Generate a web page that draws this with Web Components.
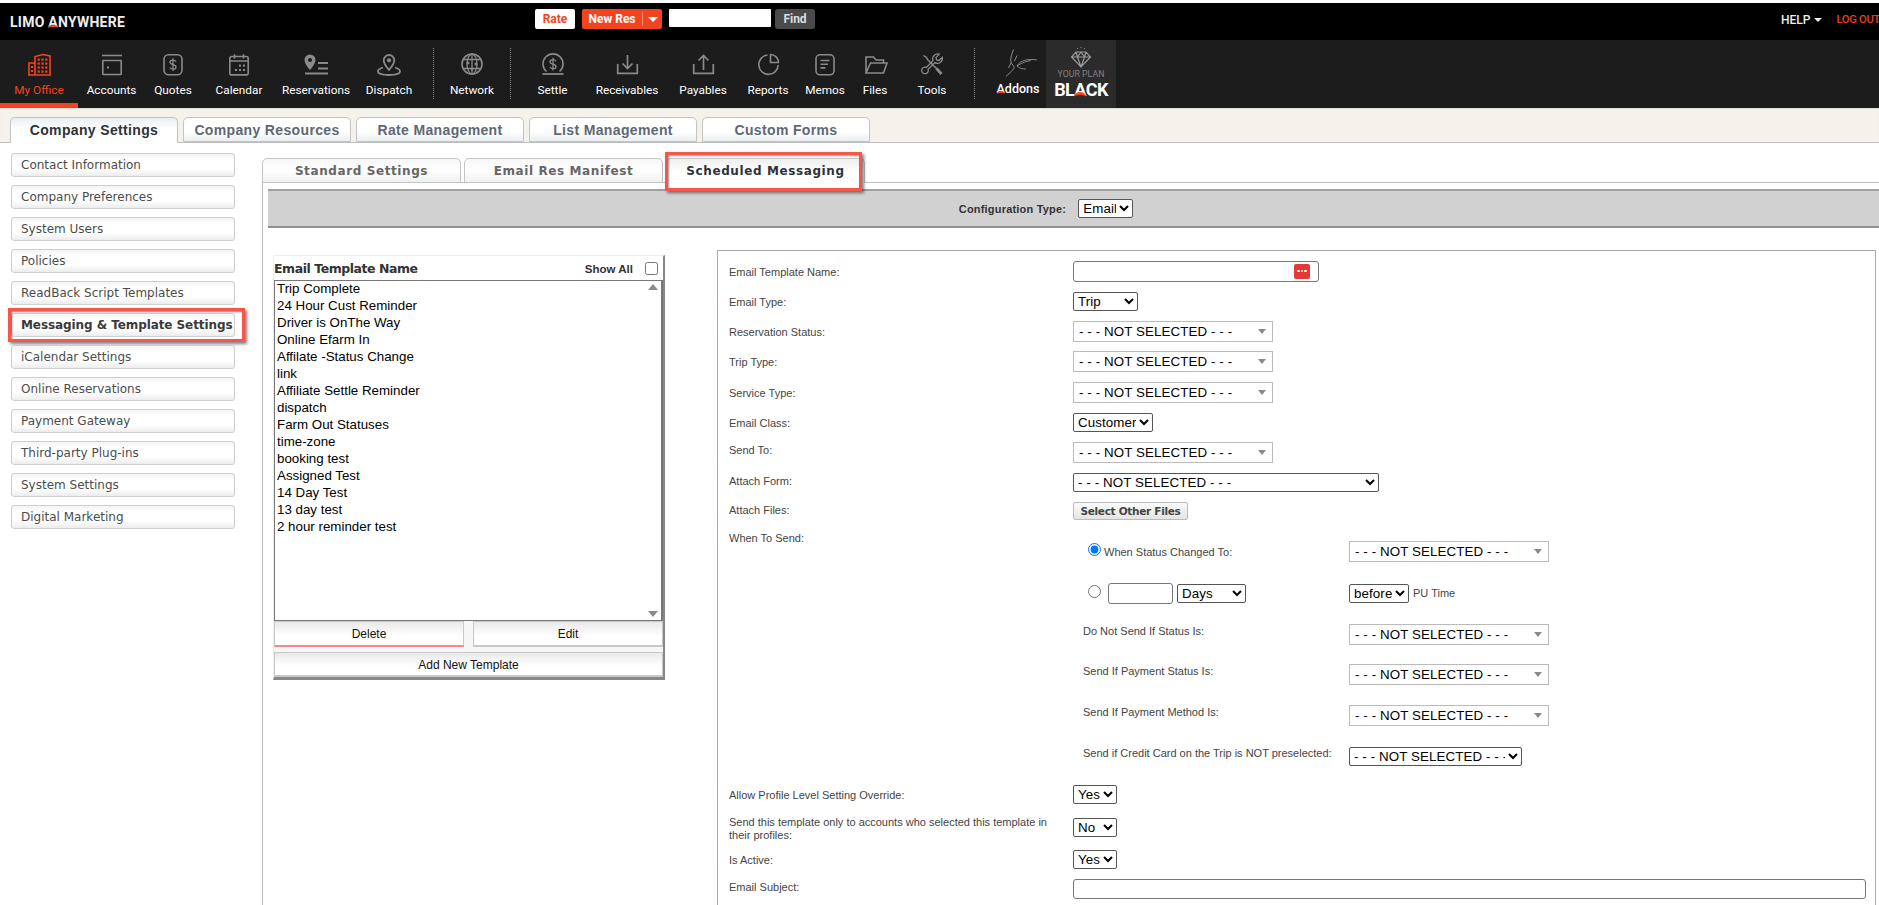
<!DOCTYPE html>
<html>
<head>
<meta charset="utf-8">
<title>Limo Anywhere</title>
<style>
  html, body { margin: 0; height: 905px; overflow: hidden; background: #fff; }
  body { font-family: "Liberation Sans", Arial, sans-serif; padding-top: 3px; box-sizing: border-box; display: flex; flex-direction: column; }
  la-main { flex: 1; min-height: 0; }
</style>
</head>
<body>

<la-topbar></la-topbar>

<la-nav>
  <la-nav-item w="78" active label="My Office">
    <svg width="28" height="24" viewBox="0 0 28 24" fill="none" stroke="currentColor" stroke-width="1.6"><path d="M4 22V10h6M10 22V3.5l8-2 7 1.5v19M3 22h23"/><g fill="currentColor" stroke="none"><rect x="12.6" y="5.5" width="2.2" height="2.2"/><rect x="16.4" y="5.5" width="2.2" height="2.2"/><rect x="20.2" y="5.5" width="2.2" height="2.2"/><rect x="12.6" y="9.5" width="2.2" height="2.2"/><rect x="16.4" y="9.5" width="2.2" height="2.2"/><rect x="20.2" y="9.5" width="2.2" height="2.2"/><rect x="12.6" y="13.5" width="2.2" height="2.2"/><rect x="16.4" y="13.5" width="2.2" height="2.2"/><rect x="20.2" y="13.5" width="2.2" height="2.2"/><rect x="12.6" y="17.5" width="2.2" height="2.2"/><rect x="16.4" y="17.5" width="2.2" height="2.2"/><rect x="20.2" y="17.5" width="2.2" height="2.2"/><rect x="6" y="13" width="2" height="2"/><rect x="6" y="17" width="2" height="2"/></g></svg>
  </la-nav-item>
  <la-nav-item w="67" label="Accounts">
    <svg width="28" height="24" viewBox="0 0 28 24" fill="none" stroke="currentColor" stroke-width="1.6"><path d="M4 2.5h20"/><rect x="4.8" y="7.5" width="18.4" height="14" rx=".5"/><rect x="9" y="13.5" width="2" height="2" fill="currentColor" stroke="none"/></svg>
  </la-nav-item>
  <la-nav-item w="56" label="Quotes">
    <svg width="28" height="24" viewBox="0 0 28 24" fill="none" stroke="currentColor" stroke-width="1.6"><rect x="5" y="1.8" width="18" height="20" rx="4.5"/><path d="M17 8.6c-.6-1-1.6-1.5-3-1.5-1.8 0-3 .9-3 2.2 0 3 6 1.6 6 4.6 0 1.3-1.2 2.2-3 2.2-1.4 0-2.5-.6-3-1.6M14 5.3v12.6" stroke-width="1.3"/></svg>
  </la-nav-item>
  <la-nav-item w="76" label="Calendar">
    <svg width="28" height="24" viewBox="0 0 28 24" fill="none" stroke="currentColor" stroke-width="1.6"><rect x="4.8" y="3.5" width="18.4" height="18.4" rx="2"/><path d="M5 8h18M9.5 1.2v4.4M18.5 1.2v4.4"/><g fill="currentColor" stroke="none"><rect x="14" y="11.6" width="2" height="2"/><rect x="18" y="11.6" width="2" height="2"/><rect x="10" y="16" width="2" height="2"/><rect x="14" y="16" width="2" height="2"/><rect x="18" y="16" width="2" height="2"/></g></svg>
  </la-nav-item>
  <la-nav-item w="78" label="Reservations">
    <svg width="28" height="24" viewBox="0 0 28 24" fill="none" stroke="currentColor" stroke-width="1.6"><path d="M8 1.5A5.5 5.5 0 0 0 2.5 7C2.5 11 8 17 8 17s5.500-6 5.500-10A5.500 5.500 0 0 0 8 1.500z" fill="currentColor" stroke="none"/><circle cx="8" cy="7" r="2" fill="#1c1c1c" stroke="none"/><path d="M16 10h10M16 15.500h10M3 20.500h23" stroke-width="1.800"/></svg>
  </la-nav-item>
  <la-nav-item w="68" label="Dispatch">
    <svg width="28" height="24" viewBox="0 0 28 24" fill="none" stroke="currentColor" stroke-width="1.6"><path d="M14 2a5.300 5.300 0 0 0-5.300 5.300C8.700 11 14 16.800 14 16.800S19.300 11 19.300 7.300A5.300 5.300 0 0 0 14 2z" stroke-width="1.800"/><circle cx="14" cy="7.300" r="2.100" fill="currentColor" stroke="none"/><path d="M8 14.500c-3.400 1-5 2.500-5 4 0 2.200 5 3.500 11 3.500s11-1.300 11-3.500c0-1.500-1.600-3-5-4" stroke-width="1.800"/></svg>
  </la-nav-item>
  <la-nav-sep gap="10"></la-nav-sep>
  <la-nav-item w="76" label="Network">
    <svg width="28" height="24" viewBox="0 0 28 24" fill="none" stroke="currentColor" stroke-width="1.300"><circle cx="14" cy="11" r="10" stroke-width="1.600"/><ellipse cx="14" cy="11" rx="5" ry="10"/><path d="M14 1v20M5 6.500h18M5 15.500h18"/><g fill="currentColor" stroke="none"><circle cx="10" cy="10" r="1.500"/><circle cx="18" cy="11" r="1.500"/><circle cx="14" cy="16" r="1.500"/></g></svg>
  </la-nav-item>
  <la-nav-sep></la-nav-sep>
  <la-nav-item w="83" label="Settle">
    <svg width="28" height="24" viewBox="0 0 28 24" fill="none" stroke="currentColor" stroke-width="1.600"><path d="M7.500 18.500A10 10 0 1 1 20.500 18.500"/><path d="M3.500 21h21" stroke-width="1.800"/><path d="M17 8.100c-.6-1-1.600-1.500-3-1.500-1.800 0-3 .9-3 2.200 0 3 6 1.600 6 4.600 0 1.300-1.200 2.200-3 2.200-1.400 0-2.500-.6-3-1.600M14 4.800v12.600" stroke-width="1.300"/></svg>
  </la-nav-item>
  <la-nav-item w="66" label="Receivables">
    <svg width="28" height="24" viewBox="0 0 28 24" fill="none" stroke="currentColor" stroke-width="1.700"><path d="M4.700 11v9.300h19.600V11M14.500 2v13.500M9.500 10.500l5 5 5-5"/></svg>
  </la-nav-item>
  <la-nav-item w="86" label="Payables">
    <svg width="28" height="24" viewBox="0 0 28 24" fill="none" stroke="currentColor" stroke-width="1.700"><path d="M4.700 11v9.300h19.600V11M14.500 17V2.500M9.500 7.500l5-5 5 5"/></svg>
  </la-nav-item>
  <la-nav-item w="44" label="Reports">
    <svg width="28" height="24" viewBox="0 0 28 24" fill="none" stroke="currentColor" stroke-width="1.600"><path d="M13.500 2A9.700 9.700 0 1 0 24.200 12"/><path d="M16.500 1.500A8 8 0 0 1 24.500 9.500H16.500z"/></svg>
  </la-nav-item>
  <la-nav-item w="70" label="Memos">
    <svg width="28" height="24" viewBox="0 0 28 24" fill="none" stroke="currentColor" stroke-width="1.600"><rect x="5" y="1.800" width="18" height="20" rx="4"/><path d="M9.500 7.500h9M9.500 11.200h7.500M9.500 14.900h5"/></svg>
  </la-nav-item>
  <la-nav-item w="30" label="Files">
    <svg width="28" height="24" viewBox="0 0 28 24" fill="none" stroke="currentColor" stroke-width="1.600"><path d="M5 20V4h7.500l2.500 3h7.500v3M5 20h17.500L26 10H9.500z"/></svg>
  </la-nav-item>
  <la-nav-item w="84" label="Tools">
    <svg width="28" height="24" viewBox="0 0 28 24" fill="none" stroke="currentColor" stroke-width="1.600"><path d="M5.500 2.500L8.500 4.500 9.500 6.500 19 16" stroke-width="1.400"/><path d="M18.500 15.500l5 5.500" stroke-width="2.800"/><path d="M24.300 4.300l-3.200 3.200-2.500-.6-.6-2.500 3.200-3.200a5 5 0 0 0-6.200 6.500L8.300 14.400a3.300 3.300 0 1 0 1.800 2l6.700-6.800a5 5 0 0 0 7.500-5.300z" stroke-width="1.300"/></svg>
  </la-nav-item>
  <la-nav-sep></la-nav-sep>
  <la-nav-addons></la-nav-addons>
  <la-plan-badge></la-plan-badge>
</la-nav>

<la-tabs>
  <la-tab active>Company Settings</la-tab>
  <la-tab>Company Resources</la-tab>
  <la-tab>Rate Management</la-tab>
  <la-tab>List Management</la-tab>
  <la-tab>Custom Forms</la-tab>
</la-tabs>

<la-main>
  <la-side-menu slot="side">
    <la-menu-item>Contact Information</la-menu-item>
    <la-menu-item>Company Preferences</la-menu-item>
    <la-menu-item>System Users</la-menu-item>
    <la-menu-item>Policies</la-menu-item>
    <la-menu-item>ReadBack Script Templates</la-menu-item>
    <la-menu-item active>Messaging &amp; Template Settings</la-menu-item>
    <la-menu-item>iCalendar Settings</la-menu-item>
    <la-menu-item>Online Reservations</la-menu-item>
    <la-menu-item>Payment Gateway</la-menu-item>
    <la-menu-item>Third-party Plug-ins</la-menu-item>
    <la-menu-item>System Settings</la-menu-item>
    <la-menu-item>Digital Marketing</la-menu-item>
  </la-side-menu>

  <la-subtabs slot="tabs">
    <la-subtab>Standard Settings</la-subtab>
    <la-subtab>Email Res Manifest</la-subtab>
    <la-subtab active>Scheduled Messaging</la-subtab>
  </la-subtabs>

  <la-config-bar slot="bar"></la-config-bar>

  <la-template-list slot="list">
    <div>Trip Complete</div>
    <div>24 Hour Cust Reminder</div>
    <div>Driver is OnThe Way</div>
    <div>Online Efarm In</div>
    <div>Affilate -Status Change</div>
    <div>link</div>
    <div>Affiliate Settle Reminder</div>
    <div>dispatch</div>
    <div>Farm Out Statuses</div>
    <div>time-zone</div>
    <div>booking test</div>
    <div>Assigned Test</div>
    <div>14 Day Test</div>
    <div>13 day test</div>
    <div>2 hour reminder test</div>
  </la-template-list>

  <la-form-panel slot="form">
    <la-row h="30"><span slot="label">Email Template Name:</span><la-input w="246" h="21" picker></la-input></la-row>
    <la-row h="30"><span slot="label">Email Type:</span><la-select w="65" value="Trip"></la-select></la-row>
    <la-row h="30"><span slot="label">Reservation Status:</span><la-combo></la-combo></la-row>
    <la-row h="31"><span slot="label">Trip Type:</span><la-combo></la-combo></la-row>
    <la-row h="31"><span slot="label">Service Type:</span><la-combo></la-combo></la-row>
    <la-row h="29"><span slot="label">Email Class:</span><la-select w="80" value="Customer"></la-select></la-row>
    <la-row h="31" lift="7"><span slot="label">Send To:</span><la-combo></la-combo></la-row>
    <la-row h="29" lift="5"><span slot="label">Attach Form:</span><la-select w="306" value="- - - NOT SELECTED - - -"></la-select></la-row>
    <la-row h="28" lift="4"><span slot="label">Attach Files:</span><la-file-button>Select Other Files</la-file-button></la-row>

    <la-when>
      <la-when-row h="41"><la-radio checked mr="-1"></la-radio><span>When Status Changed To:</span><la-combo slot="ctl"></la-combo></la-when-row>
      <la-when-row h="42"><la-radio mr="3"></la-radio><la-input w="65" h="21"></la-input><la-select w="69" value="Days"></la-select><la-select slot="ctl" w="60" value="before"></la-select><span slot="ctl">PU Time</span></la-when-row>
      <la-when-row h="40" lift="7"><span>Do Not Send If Status Is:</span><la-combo slot="ctl"></la-combo></la-when-row>
      <la-when-row h="41" lift="7"><span>Send If Payment Status Is:</span><la-combo slot="ctl"></la-combo></la-when-row>
      <la-when-row h="41" lift="7"><span>Send If Payment Method Is:</span><la-combo slot="ctl"></la-combo></la-when-row>
      <la-when-row h="40" lift="7"><span>Send if Credit Card on the Trip is NOT preselected:</span><la-select slot="ctl" w="173" value="- - - NOT SELECTED - - -"></la-select></la-when-row>
    </la-when>

    <la-row h="37"><span slot="label">Allow Profile Level Setting Override:</span><la-select w="44" value="Yes"></la-select></la-row>
    <la-row h="29"><span slot="label">Send this template only to accounts who selected this template in<br>their profiles:</span><la-select w="44" value="No"></la-select></la-row>
    <la-row h="35"><span slot="label">Is Active:</span><la-select w="44" value="Yes"></la-select></la-row>
    <la-row h="24" lift="6"><span slot="label">Email Subject:</span><la-input w="793" h="20"></la-input></la-row>
  </la-form-panel>
</la-main>

<script>
  const FONT = '"Liberation Sans", Arial, sans-serif';
  const WIDE = '"DejaVu Sans", Verdana, sans-serif';
  const ROBOTO = 'Roboto, "Liberation Sans", sans-serif';

  class Base extends HTMLElement {
    constructor() {
      super();
      this.attachShadow({ mode: 'open' });
    }
    connectedCallback() {
      this.shadowRoot.innerHTML = this.render();
    }
    attr(name, fallback) {
      return this.hasAttribute(name) ? this.getAttribute(name) : fallback;
    }
  }

  class LaTopbar extends Base {
    render() {
      return `<style>
        :host { display: flex; height: 37px; background: #000; align-items: flex-start; font-family: ${ROBOTO}; box-sizing: border-box; padding-top: 6px; overflow: hidden; flex: none; }
        .logo { margin: 5px 0 0 10px; color: #eee; font-size: 14px; font-weight: 700; letter-spacing: .25px; width: 525px; white-space: nowrap; }
        .a { position: relative; display: inline-block; }
        .a::after { content: ""; position: absolute; left: 0; right: 0; bottom: 2px; height: 3px; background: #000; border-top: 2px solid #f4441f; border-radius: 50% 50% 0 0 / 100% 100% 0 0; box-sizing: border-box; }
        .btn { height: 20px; line-height: 20px; font-size: 12px; font-weight: 700; border-radius: 2px; text-align: center; box-sizing: border-box; }
        .rate { width: 40px; background: #fff; color: #f4441f; margin-right: 7px; }
        .new { width: 80px; background: #f4441f; color: #fff; display: flex; margin-right: 7px; }
        .new b { width: 60px; border-right: 1px solid #f9937c; font-weight: 700; height: 14px; line-height: 14px; margin-top: 3px; }
        .new i { flex: 1; display: flex; align-items: center; justify-content: center; }
        .new i::after { content: ""; border: 5px solid transparent; border-top: 5px solid #fff; border-bottom: 0; }
        input { width: 102px; height: 18px; padding: 0; margin: 0 4px 0 0; border: 0; background: #fff; border-radius: 1px; box-sizing: border-box; }
        .find { width: 40px; background: #4a4a4a; color: #ddd; border-radius: 3px; }
        .right { margin-left: auto; display: flex; margin-top: 4px; font-size: 12px; font-weight: 500; white-space: nowrap; width: 98px; }
        .help { color: #eee; display: flex; align-items: center; }
        .help::after { content: ""; margin-left: 4px; border: 4.500px solid transparent; border-top: 4.500px solid #eee; border-bottom: 0; }
        .out { color: #e8401c; margin-left: 14px; font-size: 11.200px; line-height: 14px; letter-spacing: -.3px; }
      </style>
      <div class="logo">LIMO <span class="a">A</span>NYWHERE</div>
      <div class="btn rate">Rate</div>
      <div class="btn new"><b>New Res</b><i></i></div>
      <input type="text">
      <div class="btn find">Find</div>
      <div class="right"><span class="help">HELP</span><span class="out">LOG OUT</span></div>`;
    }
  }

  class LaNav extends Base {
    render() {
      return `<style>
        :host { display: flex; height: 68px; background: #1c1c1c; flex: none; font-family: ${ROBOTO}; }
      </style><slot></slot>`;
    }
  }

  class LaNavItem extends Base {
    render() {
      const active = this.hasAttribute('active');
      return `<style>
        :host { display: flex; flex-direction: column; align-items: center; width: ${this.attr('w', 60)}px; height: 68px; flex: none; box-sizing: border-box; padding-top: 13px; color: ${active ? '#f4441f' : '#8a8a8a'}; ${active ? 'border-bottom: 5px solid #f4441f;' : ''} }
        .icon { height: 24px; }
        ::slotted(svg) { display: block; }
        .label { margin-top: 6px; font-size: 11.800px; line-height: 14px; color: ${active ? '#f4441f' : '#fff'}; white-space: nowrap; }
      </style><div class="icon"><slot></slot></div><div class="label">${this.attr('label', '')}</div>`;
    }
  }

  class LaNavSep extends Base {
    render() {
      return `<style>
        :host { display: block; flex: none; width: 1px; height: 51px; margin: 8px 0 0 ${this.attr('gap', 0)}px; border-left: 1px dotted #8a8a8a; box-sizing: border-box; }
      </style>`;
    }
  }

  class LaNavAddons extends Base {
    render() {
      return `<style>
        :host { display: flex; flex-direction: column; align-items: center; width: 56px; margin-left: 15px; height: 68px; flex: none; box-sizing: border-box; padding-top: 9px; }
        svg { display: block; margin-left: 6px; }
        .label { margin-top: 5px; color: #fff; font-size: 12.500px; font-weight: 500; line-height: 14px; }
        .a { position: relative; display: inline-block; }
        .a::after { content: ""; position: absolute; left: 0; right: 0; bottom: 2px; height: 3px; background: #1c1c1c; border-top: 2px solid #f4441f; border-radius: 50% 50% 0 0 / 100% 100% 0 0; box-sizing: border-box; }
      </style>
      <svg width="32" height="28" viewBox="0 0 32 28" fill="none" stroke="#9a9a9a" stroke-width=".9"><path d="M8.500.5C7 5 5 9 6 13c.8 3 3 3.500 3 5.500 0 2-4 5-8 9"/><path d="M12 6.500L9.500 12M6 14L3.500 19"/><path d="M32 11c-8-1.500-17 0-20 6 5-3.500 10-5 14-5.500M12 17c2 2 5 3 9 3" stroke-width=".8"/></svg>
      <div class="label"><span class="a">A</span>ddons</div>`;
    }
  }

  class LaPlanBadge extends Base {
    render() {
      return `<style>
        :host { display: flex; flex-direction: column; align-items: center; width: 70px; height: 68px; flex: none; background: #2b2b2b; box-sizing: border-box; padding-top: 6px; }
        svg { display: block; }
        .plan { margin-top: 0; color: #808080; font-size: 8.800px; line-height: 12px; white-space: nowrap; }
        .black { color: #fff; font-size: 18px; font-weight: 700; line-height: 19px; letter-spacing: -.6px; }
        .a { position: relative; display: inline-block; }
        .a::after { content: ""; position: absolute; left: 0; right: 0; bottom: 2px; height: 5px; background: #2b2b2b; border-top: 3px solid #f4441f; border-radius: 50% 50% 0 0 / 100% 100% 0 0; box-sizing: border-box; }
      </style>
      <svg width="22" height="22" viewBox="0 0 22 22" fill="none" stroke="#9a9a9a" stroke-width="1.200"><path d="M6 6h10l4.500 5L11 21 1.500 11zM1.500 11h19M7.500 11L11 21l3.500-10M6 6l1.500 5L11 6l3.500 5L16 6"/><path d="M7 2.500h.8M10.600 1.500h.8M14.200 2.500h.8" stroke-width="1.100"/></svg>
      <div class="plan">YOUR PLAN</div>
      <div class="black">BL<span class="a">A</span>CK</div>`;
    }
  }

  class LaTabs extends Base {
    render() {
      return `<style>
        :host { display: flex; flex: none; height: 35px; box-sizing: border-box; background: #f5f2ec; border-bottom: 1px solid #bdbdbd; padding: 9px 0 0 10px; gap: 5px; align-items: flex-start; box-shadow: inset 0 1px 1px #ddd; }
      </style><slot></slot>`;
    }
  }

  class LaTab extends Base {
    render() {
      const active = this.hasAttribute('active');
      return `<style>
        :host { display: block; width: 168px; height: ${active ? 26 : 25}px; box-sizing: border-box; border: 1px solid #c4c4c4; ${active ? 'border-bottom: 0;' : ''} border-radius: 5px 5px 0 0; text-align: center; font: bold 14px/24px ${FONT}; letter-spacing: .35px; color: ${active ? '#2f3338' : '#5e6874'}; background: ${active ? 'linear-gradient(#eaeef0,#fff 45%)' : 'linear-gradient(#fff 60%,#e9eef0)'}; white-space: nowrap; }
      </style><slot></slot>`;
    }
  }

  class LaMain extends Base {
    render() {
      return `<style>
        :host { display: grid; grid-template-columns: 262px 1fr; background: #fff; overflow: hidden; }
        .side { padding: 10px 0 0 11px; }
        .content { min-width: 0; display: flex; flex-direction: column; padding-top: 15px; }
        .pane { flex: 1; border-left: 1px solid #bdbdbd; min-height: 0; }
        .bar { padding: 6px 0 0 5px; }
        .cols { display: flex; align-items: flex-start; padding: 22px 3px 0 10px; gap: 52px; height: 100%; box-sizing: border-box; }
      </style>
      <div class="side"><slot name="side"></slot></div>
      <div class="content">
        <slot name="tabs"></slot>
        <div class="pane">
          <div class="bar"><slot name="bar"></slot></div>
          <div class="cols"><slot name="list"></slot><slot name="form"></slot></div>
        </div>
      </div>`;
    }
  }

  class LaSideMenu extends Base {
    render() {
      return `<style>
        :host { display: flex; flex-direction: column; gap: 8px; width: 224px; }
      </style><slot></slot>`;
    }
  }

  class LaMenuItem extends Base {
    render() {
      const active = this.hasAttribute('active');
      return `<style>
        :host { display: block; position: relative; height: 24px; box-sizing: border-box; border: 1px solid #cfcfcf; border-radius: 3px; padding-left: 9px; font: ${active ? 'bold' : 'normal'} 12px/22px ${WIDE}; letter-spacing: ${active ? '-.08px' : '0'}; color: ${active ? '#3a3a3a' : '#4c4c4c'}; background: linear-gradient(#f4f4f4,#fff 30%,#fff 68%,#ececec); white-space: nowrap; }
        .mark { position: absolute; left: -4px; top: -6px; width: 237px; height: 34px; box-sizing: border-box; border: 3px solid #f5574b; box-shadow: 2px 2px 3px rgba(0,0,0,.5), inset 1px 1px 2px rgba(0,0,0,.5); }
      </style><slot></slot>${active ? '<div class="mark"></div>' : ''}`;
    }
  }

  class LaSubtabs extends Base {
    render() {
      return `<style>
        :host { display: flex; flex: none; height: 25px; box-sizing: border-box; border-bottom: 1px solid #bdbdbd; gap: 3px; align-items: flex-start; }
      </style><slot></slot>`;
    }
  }

  class LaSubtab extends Base {
    render() {
      const active = this.hasAttribute('active');
      return `<style>
        :host { display: block; position: relative; width: 199px; height: 25px; box-sizing: border-box; border: 1px solid #c4c4c4; ${active ? 'border-bottom: 0;' : ''} border-radius: 5px 5px 0 0; text-align: center; font: bold 12px/24px ${WIDE}; letter-spacing: .6px; color: ${active ? '#2f3338' : '#666'}; background: ${active ? 'linear-gradient(#eee,#fff 50%)' : 'linear-gradient(#f7f7f7,#fff 50%,#eef0f0)'}; white-space: nowrap; }
        .mark { position: absolute; left: -2px; top: -7px; width: 197px; height: 39px; box-sizing: border-box; border: 3px solid #f5574b; box-shadow: 2px 2px 3px rgba(0,0,0,.5), inset 1px 1px 2px rgba(0,0,0,.4); }
      </style><slot></slot>${active ? '<div class="mark"></div>' : ''}`;
    }
  }

  class LaConfigBar extends Base {
    render() {
      return `<style>
        :host { display: flex; height: 39px; box-sizing: border-box; align-items: center; justify-content: center; gap: 12px; background: #d1d1d1; border-top: 2px solid #a0a0a0; border-bottom: 2px solid #8f8f8f; padding-right: 55px; font: bold 11px ${FONT}; letter-spacing: .2px; color: #333; }
      </style><span>Configuration Type:</span><la-select w="55" value="Email"></la-select>`;
    }
  }

  class LaTemplateList extends Base {
    render() {
      return `<style>
        :host { display: block; width: 392px; margin-top: 5px; flex: none; box-sizing: border-box; border-top: 1px solid #eee; border-left: 1px solid #eee; border-right: 2px solid #888; border-bottom: 3px solid #888; background: #f6f6f6; }
        .head { display: flex; align-items: center; height: 24px; padding-top: 1px; box-sizing: border-box; background: #fff; font: bold 12.500px ${WIDE}; color: #333; letter-spacing: -.45px; }
        .all { margin-left: auto; font-family: ${FONT}; font-size: 11.500px; letter-spacing: 0; display: flex; align-items: center; }
        input { width: 13px; height: 13px; margin: 0 5px 0 12px; }
        .box { position: relative; height: 341px; box-sizing: border-box; border: 1px solid #777; border-right-width: 2px; background: #fff; padding: 0 2px; font: 13.330px/17px ${FONT}; color: #000; overflow: hidden; }
        .items { margin-top: -1px; }
        .up, .down { position: absolute; right: 3px; border: 5px solid transparent; }
        .up { top: 3px; border-bottom: 6px solid #8a8a8a; border-top: 0; }
        .down { bottom: 3px; border-top: 6px solid #8a8a8a; border-bottom: 0; }
        .pair { display: flex; gap: 9px; }
        button { display: block; width: 100%; height: 26px; padding: 0; box-sizing: border-box; border: 1px solid #c8c8c8; border-bottom-width: 2px; background: linear-gradient(#e9e9e9,#fff 60%); font: 12px ${FONT}; color: #111; }
        .del { border-bottom-color: #f28a8a; }
        .add { margin-top: 5px; height: 25px; padding-top: 2px; }
      </style>
      <div class="head"><span>Email Template Name</span><span class="all">Show All<input type="checkbox"></span></div>
      <div class="box"><div class="items"><slot></slot></div><i class="up"></i><i class="down"></i></div>
      <div class="pair"><button class="del">Delete</button><button>Edit</button></div>
      <button class="add">Add New Template</button>`;
    }
  }

  class LaFormPanel extends Base {
    render() {
      return `<style>
        :host { display: block; flex: 1; min-width: 0; height: 700px; box-sizing: border-box; border: 1px solid #aaa; padding-top: 5px; font: 11px/13px ${FONT}; color: #444; }
      </style><slot></slot>`;
    }
  }

  class LaRow extends Base {
    render() {
      return `<style>
        :host { display: grid; grid-template-columns: 355px 1fr; align-items: center; height: ${this.attr('h', 30)}px; }
        .label { padding: 2px 0 ${this.attr('lift', 0)}px 11px; white-space: nowrap; }
        .control { display: flex; align-items: center; }
      </style><div class="label"><slot name="label"></slot></div><div class="control"><slot></slot></div>`;
    }
  }

  class LaWhen extends Base {
    render() {
      return `<style>
        :host { display: grid; grid-template-columns: 355px 1fr; padding-top: 6px; }
        .label { padding: 1px 0 0 11px; line-height: 13px; }
      </style><div class="label">When To Send:</div><div><slot></slot></div>`;
    }
  }

  class LaWhenRow extends Base {
    render() {
      return `<style>
        :host { display: grid; grid-template-columns: 276px 1fr; align-items: center; height: ${this.attr('h', 41)}px; white-space: nowrap; }
        .left { display: flex; align-items: center; gap: 4px; padding: 1px 0 ${this.attr('lift', 0)}px 10px; }
        .right { display: flex; align-items: center; gap: 4px; }
      </style><div class="left"><slot></slot></div><div class="right"><slot name="ctl"></slot></div>`;
    }
  }

  class LaSelect extends Base {
    render() {
      return `<style>
        :host { display: block; flex: none; }
        select { display: block; width: ${this.attr('w', 60)}px; height: 19px; padding: 0; margin: 0; box-sizing: border-box; background: #fff; color: #000; border: 1px solid #555; border-radius: 2px; font: 13.330px ${FONT}; letter-spacing: .1px; }
      </style><select><option>${this.attr('value', '')}</option></select>`;
    }
  }

  class LaCombo extends Base {
    render() {
      return `<style>
        :host { display: flex; flex: none; align-items: center; justify-content: space-between; width: 200px; height: 21px; box-sizing: border-box; border: 1px solid #bbb; padding: 0 6px 0 5px; background: #fff; font: 13.330px ${FONT}; letter-spacing: .1px; color: #000; white-space: nowrap; }
        i { border: 4.500px solid transparent; border-top: 5px solid #8a8a8a; border-bottom: 0; }
      </style><span>- - - NOT SELECTED - - -</span><i></i>`;
    }
  }

  class LaInput extends Base {
    render() {
      const picker = this.hasAttribute('picker');
      return `<style>
        :host { display: block; position: relative; flex: none; }
        input { display: block; width: ${this.attr('w', 100)}px; height: ${this.attr('h', 21)}px; box-sizing: border-box; margin: 0; padding: 0; background: #fff; border: 1px solid #767676; border-radius: 3px; }
        .pick { position: absolute; right: 9px; top: 3px; width: 16px; height: 15px; border-radius: 2px; background: #e53935; display: flex; align-items: center; justify-content: center; gap: 1px; }
        .pick i { width: 2.500px; height: 2.500px; border-radius: 50%; background: #fff; }
      </style><input type="text">${picker ? '<div class="pick"><i></i><i></i><i></i></div>' : ''}`;
    }
  }

  class LaRadio extends Base {
    render() {
      return `<style>
        :host { display: block; flex: none; margin-right: ${this.attr('mr', 0)}px; }
        input { display: block; width: 13px; height: 13px; margin: 0 0 5px 5px; }
      </style><input type="radio" name="${this.hasAttribute('checked') ? 'when-a' : 'when-b'}" ${this.hasAttribute('checked') ? 'checked' : ''}>`;
    }
  }

  class LaFileButton extends Base {
    render() {
      return `<style>
        :host { display: block; width: 115px; height: 18px; box-sizing: border-box; border: 1px solid #bbb; border-radius: 2px; background: linear-gradient(#fafafa,#e4e4e4); text-align: center; font: bold 10.500px/16px ${WIDE}; color: #444; letter-spacing: -.3px; white-space: nowrap; }
      </style><slot></slot>`;
    }
  }

  customElements.define('la-topbar', LaTopbar);
  customElements.define('la-nav', LaNav);
  customElements.define('la-nav-item', LaNavItem);
  customElements.define('la-nav-sep', LaNavSep);
  customElements.define('la-nav-addons', LaNavAddons);
  customElements.define('la-plan-badge', LaPlanBadge);
  customElements.define('la-tabs', LaTabs);
  customElements.define('la-tab', LaTab);
  customElements.define('la-main', LaMain);
  customElements.define('la-side-menu', LaSideMenu);
  customElements.define('la-menu-item', LaMenuItem);
  customElements.define('la-subtabs', LaSubtabs);
  customElements.define('la-subtab', LaSubtab);
  customElements.define('la-config-bar', LaConfigBar);
  customElements.define('la-template-list', LaTemplateList);
  customElements.define('la-form-panel', LaFormPanel);
  customElements.define('la-row', LaRow);
  customElements.define('la-when', LaWhen);
  customElements.define('la-when-row', LaWhenRow);
  customElements.define('la-select', LaSelect);
  customElements.define('la-combo', LaCombo);
  customElements.define('la-input', LaInput);
  customElements.define('la-radio', LaRadio);
  customElements.define('la-file-button', LaFileButton);
</script>
</body>
</html>
